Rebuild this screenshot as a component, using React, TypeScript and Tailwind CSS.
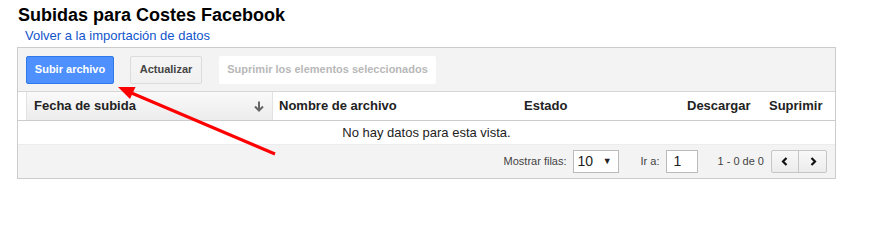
import React from "react";

export default function App() {
  return (
    <div className="relative w-[871px] h-[208px] bg-white text-[#222]" style={{ fontFamily: '"Liberation Sans", Arial, sans-serif' }}>
      <div className="pt-[4px] pl-[18px] text-[18px] leading-[22px] font-bold text-black">Subidas para Costes Facebook</div>
      <div className="mt-[2px] pl-[25px] text-[13px] leading-[16px] text-[#15c]">Volver a la importación de datos</div>
      <div className="mt-[3px] ml-[17px] w-[819px] border border-[#ccc]">
        {/* toolbar */}
        <div className="h-[44px] bg-[#f3f3f3] border-b border-[#d6d6d6] flex items-center px-[8px]">
          <div className="w-[88px] h-[28px] rounded-[2px] bg-[#4d90fe] border border-[#3079ed] flex items-center justify-center text-white text-[11px] font-bold">Subir archivo</div>
          <div className="ml-[16px] w-[72px] h-[28px] rounded-[2px] bg-gradient-to-b from-[#f5f5f5] to-[#f1f1f1] border border-[#dcdcdc] flex items-center justify-center text-[#444] text-[11px] font-bold">Actualizar</div>
          <div className="ml-[17px] w-[217px] h-[28px] rounded-[2px] bg-white flex items-center justify-center text-[#b8b8b8] text-[11px] font-bold">Suprimir los elementos seleccionados</div>
        </div>
        {/* header */}
        <div className="h-[29px] border-b border-[#ccc] flex text-[13px] font-bold text-[#222]">
          <div className="w-[8px]" />
          <div className="w-[247px] bg-gradient-to-b from-[#fafafa] to-[#ececec] border-l border-r border-[#e2e2e2] flex items-center justify-between pl-[7px] pr-[8px]">
            <span>Fecha de subida</span>
            <svg width="10" height="11" viewBox="0 0 10 11" className="mt-[1px]">
              <path d="M5 0.5 V9.5 M1 5.5 L5 9.5 L9 5.5" stroke="#666" strokeWidth="2" fill="none" />
            </svg>
          </div>
          <div className="w-[245px] flex items-center pl-[6px]">Nombre de archivo</div>
          <div className="w-[163px] flex items-center pl-[6px]">Estado</div>
          <div className="w-[82px] flex items-center pl-[6px]">Descargar</div>
          <div className="flex-1 flex items-center pl-[6px]">Suprimir</div>
        </div>
        {/* empty row */}
        <div className="h-[23px] flex items-center justify-center text-[13px] text-[#222]">No hay datos para esta vista.</div>
        {/* footer */}
        <div className="h-[34px] bg-[#f3f3f3] border-t border-[#ececec] flex items-center justify-end pr-[8px] text-[11px] text-[#444]">
          <span>Mostrar filas:</span>
          <div className="ml-[6px] w-[46px] h-[23px] bg-white border border-[#bbb] flex items-center justify-between pl-[4px] pr-[6px]">
            <span className="text-[14px] text-[#222]">10</span>
            <span className="text-[9px] text-[#222]">▼</span>
          </div>
          <span className="ml-[22px]">Ir a:</span>
          <div className="ml-[6px] w-[32px] h-[23px] bg-white border border-[#bbb] flex items-center pl-[7px]">
            <span className="text-[14px] text-[#222]">1</span>
          </div>
          <span className="ml-[20px]">1 - 0 de 0</span>
          <div className="ml-[7px] h-[23px] flex rounded-[2px] border border-[#c6c6c6] bg-gradient-to-b from-[#f8f8f8] to-[#ececec]">
            <div className="w-[27px] flex items-center justify-center border-r border-[#c6c6c6]">
              <svg width="8" height="9" viewBox="0 0 8 9"><path d="M5.5 1 L2 4.5 L5.5 8" stroke="#111" strokeWidth="2.2" fill="none" /></svg>
            </div>
            <div className="w-[27px] flex items-center justify-center">
              <svg width="8" height="9" viewBox="0 0 8 9"><path d="M2.5 1 L6 4.5 L2.5 8" stroke="#111" strokeWidth="2.2" fill="none" /></svg>
            </div>
          </div>
        </div>
      </div>
      {/* red annotation arrow */}
      <svg className="absolute left-0 top-0 pointer-events-none" width="871" height="208">
        <line x1="275" y1="154" x2="128" y2="91.5" stroke="#f00" strokeWidth="3" />
        <polygon points="118,87 135.5,87 130,99" fill="#f00" />
      </svg>
    </div>
  );
}
